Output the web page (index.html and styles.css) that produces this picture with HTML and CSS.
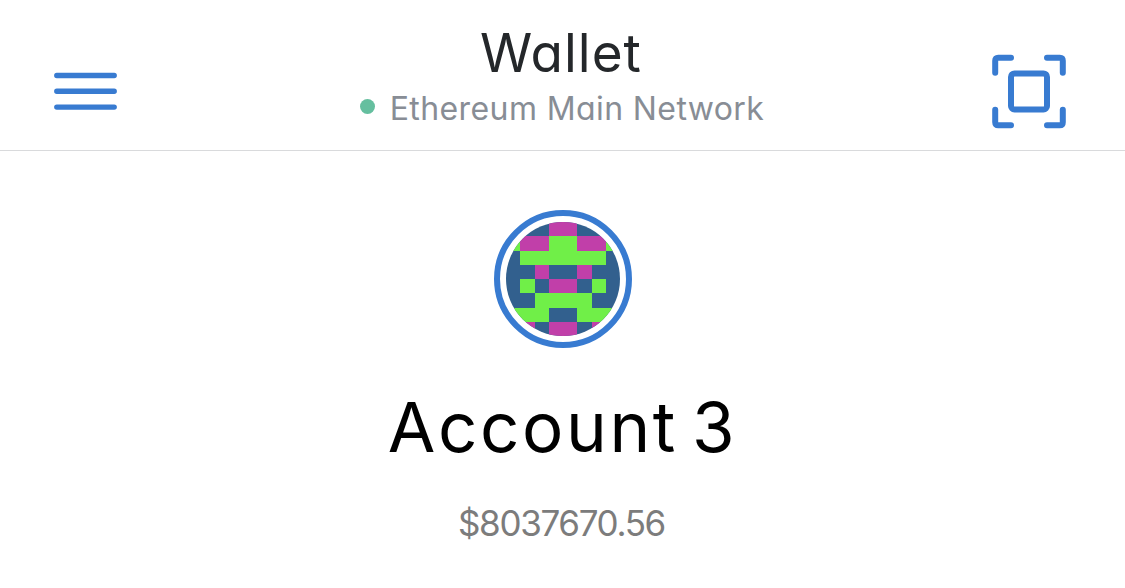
FILE: index.html
```html
<!DOCTYPE html>
<html lang="en">
<head>
  <meta charset="UTF-8" />
  <meta name="viewport" content="width=device-width, initial-scale=1.0" />
  <title>Wallet</title>
  <link rel="stylesheet" href="styles.css">
</head>
<body>
  <header class="navbar">
    <button class="icon-btn menu" aria-label="Menu">
      <svg width="64" height="38" viewBox="0 0 64 38">
        <path d="M3.8 3.5H61.2M3.8 19.3H61.2M3.8 35.1H61.2" />
      </svg>
    </button>

    <div class="heading">
      <h1 class="title">Wallet</h1>
      <div class="network">
        <span class="dot"></span>
        <span class="network-name">Ethereum Main Network</span>
      </div>
    </div>

    <button class="icon-btn scan" aria-label="Scan">
      <svg width="74" height="75" viewBox="0 0 74 75">
        <path d="M3.2 18.7V6.7Q3.2 3.7 6.2 3.7H19M55 3.7H67.8Q70.8 3.7 70.8 6.7V18.7M70.8 55.7V68.3Q70.8 71.3 67.8 71.3H55M19 71.3H6.2Q3.2 71.3 3.2 68.3V55.7" />
        <rect x="19" y="19.4" width="36" height="36" rx="3.5" />
      </svg>
    </button>
  </header>

  <main class="account">
    <div class="avatar">
      <!-- 8x8 identicon -->
      <svg viewBox="0 0 8 8" shape-rendering="crispEdges">
        <path class="bg" d="M0 0h8v8H0z" />
        <path class="green" d="M0 1h1v1H0zM3 1h2v1H3zM7 1h1v1H7zM1 2h6v1H1zM1 4h1v1H1zM6 4h1v1H6zM2 5h4v1H2zM0 6h3v1H0zM5 6h3v1H5z" />
        <path class="pink" d="M3 0h2v1H3zM1 1h2v1H1zM5 1h2v1H5zM2 3h1v1H2zM5 3h1v1H5zM3 4h2v1H3zM0 7h2v1H0zM3 7h2v1H3zM6 7h2v1H6z" />
      </svg>
    </div>
    <h2 class="name">Account 3</h2>
    <p class="balance">$8037670.56</p>
  </main>
</body>
</html>
```
FILE: styles.css
```css
:root {
  --blue: #387bd1;
  --line: #d9dadc;
  --grey: #888d95;
}

* { margin: 0; padding: 0; box-sizing: border-box; }
body {
  background: #fff;
  font-family: Inter, Lato, sans-serif;
  font-feature-settings: "cv11" 1;
}
h1, h2 { font-weight: 400; }

/* NAVBAR */
.navbar {
  display: flex; justify-content: space-between;
  height: 151px; padding: 0 59px 0 53px;
  border-bottom: 1px solid var(--line);
}
.icon-btn { display: flex; border: 0; background: none; }
.icon-btn svg { fill: none; stroke: var(--blue); stroke-linecap: round; }
.menu { width: 79px; padding-top: 72px; }
.menu svg { stroke-width: 5.4; }
.scan { padding-top: 54px; }
.scan svg { stroke-width: 6; }

.heading { display: flex; flex-direction: column; align-items: center; padding-top: 21px; }
.title { padding-right: 2px; font-size: 53px; line-height: 64px; letter-spacing: 1px; color: #24272a; }
.network { display: flex; align-items: flex-start; gap: 15px; }
.dot { width: 15px; height: 15px; margin-top: 14px; border-radius: 50%; background: #65bf9f; }
.network-name { font-size: 32px; line-height: 48px; letter-spacing: .4px; color: var(--grey); }

/* ACCOUNT */
.account { display: flex; flex-direction: column; align-items: center; padding-top: 59px; }
.avatar {
  width: 138px; height: 138px; padding: 6px;
  border: 6px solid var(--blue); border-radius: 50%;
}
.avatar svg { display: block; width: 114px; height: 114px; border-radius: 50%; }
.bg { fill: #32608e; }
.green { fill: #70ef48; }
.pink { fill: #c13fa9; }
.name { margin-top: 37px; font-size: 69px; line-height: 84px; letter-spacing: 2.6px; word-spacing: -8px; color: #000; }
.balance { margin-top: 32px; padding-right: 2px; font-size: 35px; line-height: 44px; letter-spacing: -1.35px; color: #7c7c7c; }
```
